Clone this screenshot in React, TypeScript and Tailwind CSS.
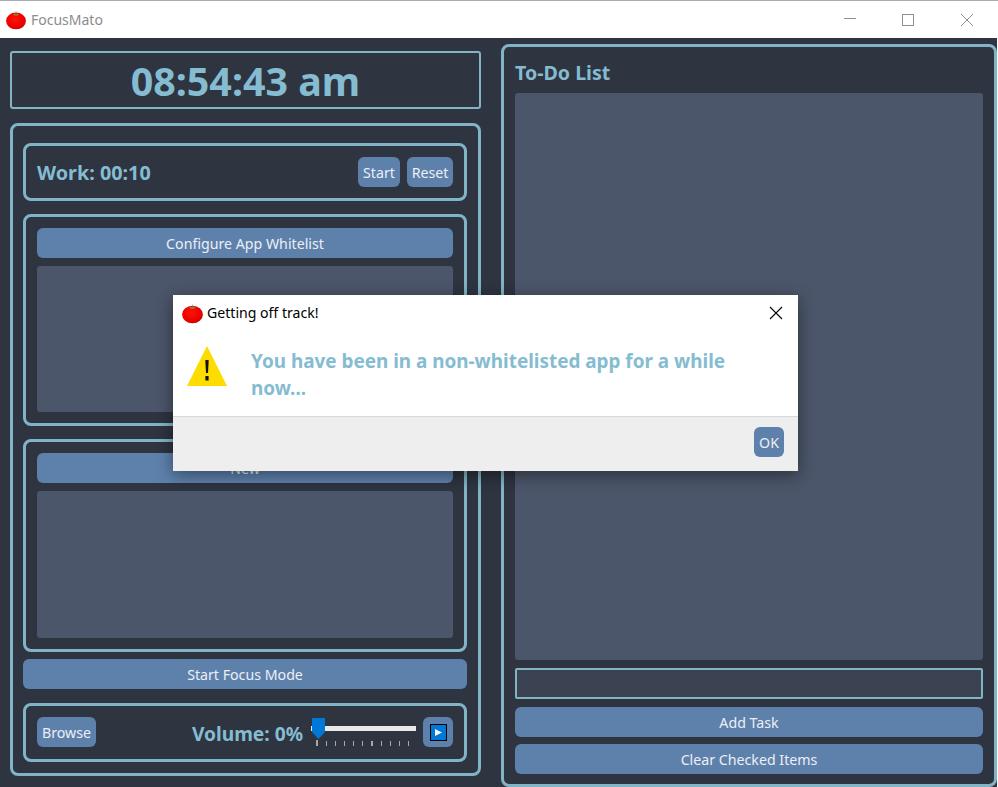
import React from 'react';

const Tomato: React.FC<{ className?: string }> = ({ className }) => (
  <svg viewBox="0 0 21 21" className={className}>
    <defs>
      <radialGradient id="tomato" cx="45%" cy="40%" r="65%">
        <stop offset="0%" stopColor="#ff1208" />
        <stop offset="75%" stopColor="#ea0000" />
        <stop offset="100%" stopColor="#b00800" />
      </radialGradient>
    </defs>
    <ellipse cx="10.5" cy="11.5" rx="10.4" ry="8.8" fill="url(#tomato)" />
    <path d="M7 4.6 L10 3.8 L10.5 0.8 L11 3.8 L14 4.6 L12 6 L9 6 Z" fill="#8a7a3a" />
  </svg>
);

const Btn: React.FC<{ children: React.ReactNode; className?: string }> = ({ children, className = '' }) => (
  <button className={`h-[30px] pt-[2px] bg-[#5e81ac] text-[#eceff4] text-[14.2px] leading-none rounded-[6px] flex items-center justify-center ${className}`}>
    {children}
  </button>
);

const Box: React.FC<{ children: React.ReactNode; className?: string }> = ({ children, className = '' }) => (
  <div className={`border-[3px] border-[#81b5c6] rounded-[8px] ${className}`}>{children}</div>
);

const ticks = [0, 1, 2, 3, 4, 5, 6, 7, 8, 9, 10];

const VolumeSlider: React.FC = () => (
  <div className="relative w-[105px] h-[30px] ml-[8px]">
    <div className="absolute left-0 right-0 top-[9px] h-[5px] bg-[#e9e9e9]" />
    <svg viewBox="0 0 13 21" className="absolute left-[1px] top-[1px] w-[13px] h-[21px]">
      <path d="M0 0 H13 V14 L6.5 21 L0 14 Z" fill="#0078d7" />
    </svg>
    <div className="absolute left-[5px] w-[93px] top-[23px] flex justify-between items-start">
      {ticks.map(i => (
        <div key={i} className={`bg-[#a9a9a3] ${i === 0 || i === 6 ? 'w-[2px]' : 'w-[1px]'} ${i === 0 ? 'h-[6px]' : 'h-[5px] mt-[1px]'}`} />
      ))}
    </div>
  </div>
);

export default function App() {
  return (
    <div className="relative w-[998px] h-[787px] overflow-hidden bg-white flex flex-col font-['Noto_Sans','Open_Sans',sans-serif]">
      {/* Title bar */}
      <div className="h-[38px] shrink-0 bg-white border-t border-[#ababab] flex items-center pl-[6px]">
        <Tomato className="w-[20px] h-[20px]" />
        <span className="ml-[5px] text-[14px] text-[#8b8b8b]">FocusMato</span>
        <div className="ml-auto flex items-center pr-[1px]">
          <svg viewBox="0 0 46 38" className="w-[46px] h-[38px]"><path d="M9 17.5 H21" stroke="#8f8f8f" /></svg>
          <svg viewBox="0 0 46 38" className="w-[46px] h-[38px] ml-[12px]"><rect x="9.5" y="13.5" width="11" height="11" fill="none" stroke="#8f8f8f" /></svg>
          <svg viewBox="0 0 46 38" className="w-[46px] h-[38px] ml-[12px]"><path d="M10 13 L22 25 M22 13 L10 25" stroke="#8f8f8f" fill="none" /></svg>
        </div>
      </div>

      <div className="flex-1 bg-[#2e3440] flex mr-[1px] min-h-0">
        {/* Left column */}
        <div className="w-[471px] ml-[10px] mt-[13px] flex flex-col gap-[14px] shrink-0">
          <div className="h-[58px] pt-[3px] border-[2px] border-[#81b5c6] rounded-[3px] flex items-center justify-center text-[39.4px] font-bold text-[#85bcd1]">
            08:54:43 am
          </div>
          <Box className="h-[653px] pl-[10px] pr-[11px] pt-[17px] flex flex-col">
            <Box className="h-[58px] flex items-center px-[11px] shrink-0">
              <span className="pt-[1px] text-[19.8px] font-bold text-[#85bcd1]">Work: 00:10</span>
              <Btn className="ml-auto w-[42px]">Start</Btn>
              <Btn className="ml-[7px] w-[46px]">Reset</Btn>
            </Box>
            <Box className="h-[212px] mt-[13px] p-[11px] flex flex-col shrink-0">
              <Btn className="shrink-0">Configure App Whitelist</Btn>
              <div className="mt-[8px] flex-1 bg-[#4c566a] rounded-[3px]" />
            </Box>
            <Box className="h-[213px] mt-[13px] p-[11px] flex flex-col shrink-0">
              <Btn className="shrink-0">New</Btn>
              <div className="mt-[8px] flex-1 bg-[#4c566a] rounded-[3px]" />
            </Box>
            <Btn className="mt-[7px] shrink-0">Start Focus Mode</Btn>
            <Box className="h-[59px] mt-[14px] flex items-start pt-[11px] px-[11px] shrink-0">
              <Btn className="w-[59px]">Browse</Btn>
              <span className="ml-auto mt-[7px] text-[19.2px] font-bold text-[#85bcd1] leading-none">Volume: 0%</span>
              <VolumeSlider />
              <Btn className="ml-[7px] w-[30px] shrink-0 !pt-0">
                <span className="w-[17px] h-[17px] bg-[#0078d7] border border-black flex items-center justify-center">
                  <svg viewBox="0 0 7 7" className="w-[7px] h-[7px]"><path d="M0 0 L7 3.5 L0 7 Z" fill="#fff" /></svg>
                </span>
              </Btn>
            </Box>
          </Box>
        </div>

        {/* To-do column */}
        <div className="w-[496px] ml-[20px] mt-[6px] h-[743px] border-[3px] border-[#81b5c6] rounded-[8px] px-[11px] flex flex-col shrink-0">
          <div className="h-[46px] shrink-0 flex items-center text-[19.6px] font-bold text-[#85bcd1] pt-[5px]">To-Do List</div>
          <div className="h-[567px] shrink-0 bg-[#4c566a] rounded-[3px]" />
          <div className="h-[31px] mt-[8px] shrink-0 bg-[#3b4252] border-[2px] border-[#81b5c6] rounded-[2px]" />
          <Btn className="mt-[8px] shrink-0">Add Task</Btn>
          <Btn className="mt-[7px] shrink-0">Clear Checked Items</Btn>
        </div>
      </div>

      {/* Alert dialog */}
      <div className="absolute left-[173px] top-[295px] w-[625px] h-[176px] bg-white flex flex-col shadow-[0_4px_16px_rgba(0,0,0,0.45)]">
        <div className="h-[36px] shrink-0 flex items-center pl-[9px]">
          <Tomato className="w-[21px] h-[21px]" />
          <span className="ml-[4px] text-[14.1px] text-black">Getting off track!</span>
          <svg viewBox="0 0 14 14" className="ml-auto mr-[15px] w-[14px] h-[14px]">
            <path d="M1 1 L13 13 M13 1 L1 13" stroke="#000" strokeWidth="1.1" fill="none" />
          </svg>
        </div>
        <div className="flex-1 flex pl-[14px] pr-[60px]">
          <svg viewBox="0 0 40 40" className="w-[40px] h-[40px] mt-[15px] shrink-0">
            <path d="M20 0 L40 40 H0 Z" fill="#ffdc00" />
            <path d="M18.3 14 H21.7 L21 27 H19 Z" fill="#111" />
            <rect x="18.4" y="30" width="3.2" height="4.5" fill="#111" />
          </svg>
          <p className="ml-[24px] mt-[17px] text-[18.9px] leading-[27px] font-bold text-[#85bcd1]">
            You have been in a non-whitelisted app for a while now...
          </p>
        </div>
        <div className="h-[55px] shrink-0 bg-[#eeeeee] border-t border-[#d9d9d9] flex items-start pt-[10px] justify-end pr-[14px]">
          <Btn className="w-[30px]">OK</Btn>
        </div>
      </div>
    </div>
  );
}
